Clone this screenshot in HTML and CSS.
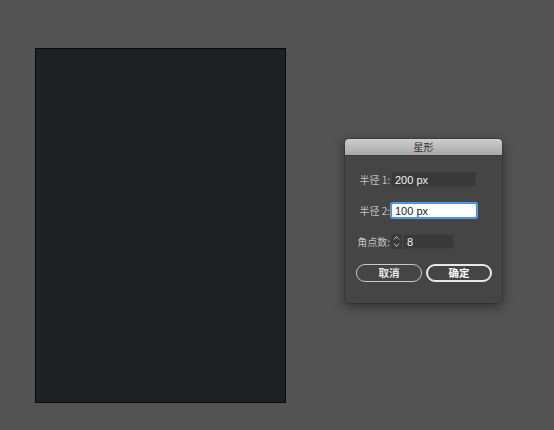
FILE: index.html
```html
<!DOCTYPE html>
<html lang="zh-CN">
<head>
  <meta charset="UTF-8">
  <title>星形</title>
  <link rel="stylesheet" href="styles.css">
</head>
<body>
  <div class="canvas">
    <div class="artboard"></div>

    <div class="dialog">
      <div class="titlebar">星形</div>
      <div class="form">
        <label class="label">半径 1:</label>
        <input class="field" type="text" value="200 px">

        <label class="label">半径 2:</label>
        <input class="field active" type="text" value="100 px">

        <label class="label">角点数:</label>
        <div class="spin-row">
          <span class="spinner">
            <svg width="7" height="13" viewBox="0 0 7 13">
              <path d="M1 4.5 L3.5 1.5 L6 4.5 M1 8.5 L3.5 11.5 L6 8.5" fill="none" stroke="#c4c4c4" stroke-width="1"/>
            </svg>
          </span>
          <input class="field small" type="text" value="8">
        </div>
      </div>
      <div class="buttons">
        <button class="btn">取消</button>
        <button class="btn primary">确定</button>
      </div>
    </div>
  </div>
</body>
</html>
```

FILE: styles.css
```css
body {
  margin: 0;
  padding: 0;
  background-color: #535353;
  font-family: "Noto Sans CJK SC", "Liberation Sans", sans-serif;
}

.canvas {
  display: flex;
  align-items: flex-start;
  padding: 48px 0 0 35px;
  height: 430px;
  box-sizing: border-box;
}

.artboard {
  width: 251px;
  height: 355px;
  box-sizing: border-box;
  background-color: #1e2122;
  border: 1px solid #0a0a0a;
}

.dialog {
  width: 157px;
  height: 164px;
  margin-left: 59px;
  margin-top: 91px;
  background-color: #454545;
  border-radius: 4px;
  box-shadow: 0 3px 12px rgba(0, 0, 0, 0.45), 0 0 0 1px rgba(0, 0, 0, 0.15);
  overflow: hidden;
}

.titlebar {
  height: 16px;
  line-height: 16px;
  text-align: center;
  font-size: 10px;
  color: #2e2e2e;
  background: linear-gradient(#cdcdcd, #a9a9a9);
  border-bottom: 1px solid #3a3a3a;
}

.form {
  display: grid;
  grid-template-columns: 45px 86px;
  column-gap: 1px;
  row-gap: 16px;
  align-items: center;
  padding: 16px 0 0 0;
}

.label {
  text-align: right;
  font-size: 10px;
  color: #c2c2c2;
  line-height: 14px;
}

.field {
  width: 85px;
  height: 15px;
  box-sizing: border-box;
  padding: 0 3px;
  font-family: "Liberation Sans", sans-serif;
  font-size: 11px;
  color: #f2f2f2;
  background-color: #393939;
  border: 1px solid #3f3f3f;
  border-radius: 2px;
  outline: none;
}

.field.active {
  background-color: #ffffff;
  color: #1a1a1a;
  border: 1px solid #3d8ee0;
  box-shadow: 0 0 0 1px #5a9ee6;
  width: 86px;
}

.spin-row {
  display: flex;
  gap: 1px;
}

.spinner {
  width: 11px;
  height: 15px;
  display: flex;
  align-items: center;
  justify-content: center;
  background-color: #393939;
  border-radius: 2px;
}

.field.small {
  width: 51px;
}

.buttons {
  display: flex;
  gap: 4px;
  padding: 15px 0 0 11px;
}

.btn {
  width: 66px;
  height: 18px;
  box-sizing: border-box;
  padding: 0;
  background: transparent;
  border: 1.5px solid #c9c9c9;
  border-radius: 9px;
  color: #e8e8e8;
  font-family: "Noto Sans CJK SC", sans-serif;
  font-size: 10.5px;
  font-weight: bold;
  line-height: 14px;
}

.btn.primary {
  border: 2px solid #e8e8e8;
  color: #ffffff;
}
```
